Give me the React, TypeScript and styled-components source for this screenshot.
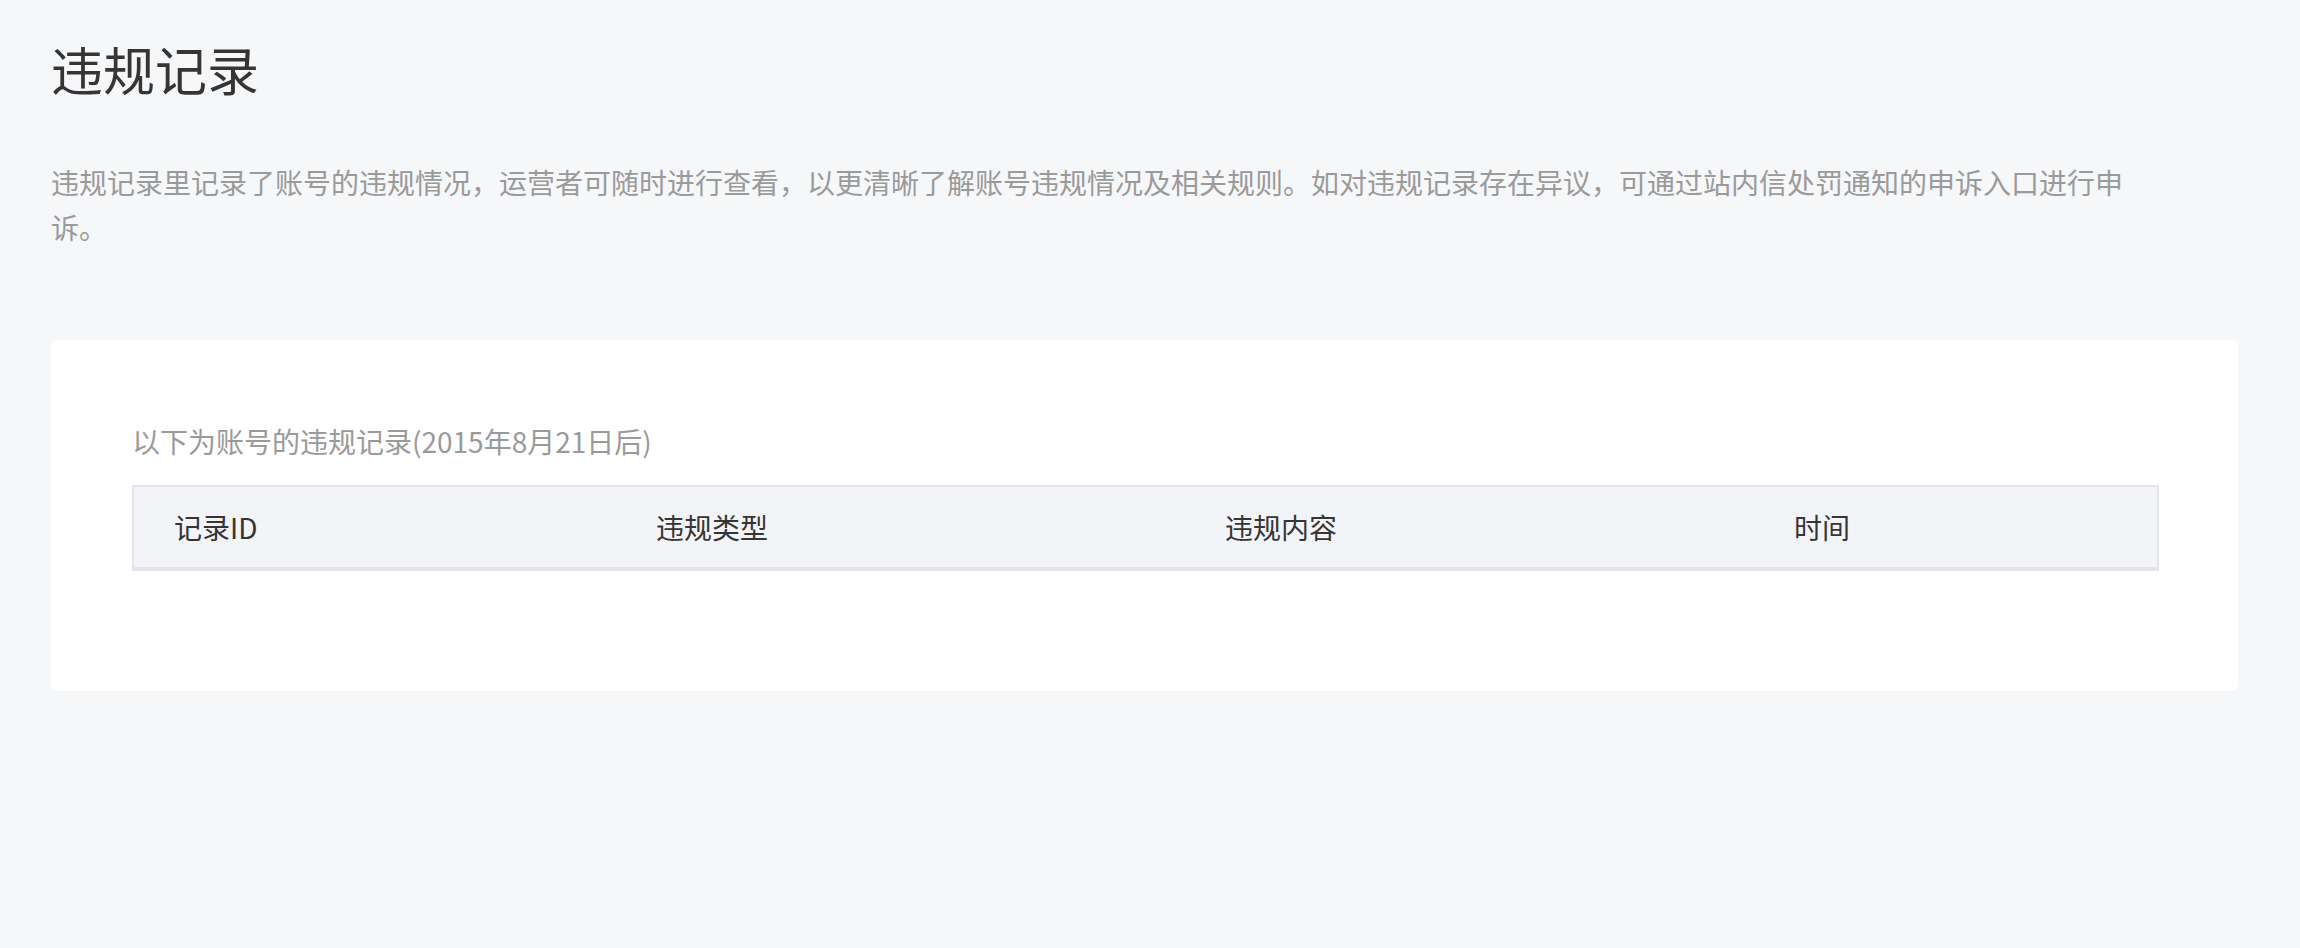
import styled, { createGlobalStyle } from "styled-components";

const textDark = "#353535";
const textGray = "#9a9a9a";
const lineColor = "#e4e5ea";

const GlobalStyle = createGlobalStyle`
  html, body {
    margin: 0;
    padding: 0;
    background: #f6f7f9;
  }
  body {
    font-family: "Noto Sans CJK SC", "Noto Sans", sans-serif;
  }
`;

const Page = styled.div`
  min-height: 100vh;
  box-sizing: border-box;
  padding: 33px 62px 0 51px;
  background: #f6f7f9;
`;

const Title = styled.h1`
  margin: 0;
  font-size: 52px;
  line-height: 72px;
  font-weight: 400;
  color: ${textDark};
`;

const Desc = styled.p`
  margin: 55px 0 0;
  max-width: 2085px;
  font-size: 28px;
  line-height: 45px;
  color: ${textGray};
`;

const Card = styled.section`
  margin-top: 90px;
  background: #ffffff;
  border-radius: 6px;
  padding: 79px 79px 120px 81px;
`;

const CardTip = styled.div`
  font-size: 28px;
  line-height: 45px;
  color: ${textGray};
`;

const Table = styled.div`
  margin-top: 21px;
`;

const HeadRow = styled.div`
  display: grid;
  grid-template-columns: 482fr 569fr 569fr 403fr;
  height: 80px;
  background: #f3f4f8;
  border: 2px solid ${lineColor};
  border-bottom-width: 4px;
`;

const HeadCell = styled.div`
  display: flex;
  align-items: center;
  padding-left: 40px;
  font-size: 28px;
  color: ${textDark};
`;

const columns = ["记录ID", "违规类型", "违规内容", "时间"];

function App() {
  return (
    <>
      <GlobalStyle />
      <Page>
        <Title>违规记录</Title>
        <Desc>
          违规记录里记录了账号的违规情况，运营者可随时进行查看，以更清晰了解账号违规情况及相关规则。如对违规记录存在异议，可通过站内信处罚通知的申诉入口进行申诉。
        </Desc>
        <Card>
          <CardTip>以下为账号的违规记录(2015年8月21日后)</CardTip>
          <Table>
            <HeadRow>
              {columns.map((c) => (
                <HeadCell key={c}>{c}</HeadCell>
              ))}
            </HeadRow>
          </Table>
        </Card>
      </Page>
    </>
  );
}

export default App;
